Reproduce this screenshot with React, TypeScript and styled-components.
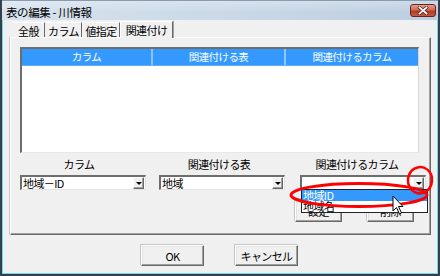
import React from "react";
import styled, { createGlobalStyle } from "styled-components";

const Global = createGlobalStyle`
  html, body { margin: 0; padding: 0; background: #fff; }
  body { width: 440px; height: 276px; overflow: hidden; }
  * { box-sizing: border-box; }
`;

const FONT = `"Noto Sans CJK JP", "Noto Sans", sans-serif`;

const Window = styled.div`
  position: relative;
  width: 440px;
  height: 276px;
  border: 2px solid #34404c;
  border-top: none;
  display: flex;
  flex-direction: column;
  font-family: ${FONT};
  font-size: 11px;
  color: #000;
  letter-spacing: -0.6px;
`;

const TitleBar = styled.div`
  height: 20px;
  flex: none;
  display: flex;
  align-items: flex-start;
  background: linear-gradient(to bottom, rgba(255,255,255,0.25), rgba(255,255,255,0) 60%),
    linear-gradient(to right, #d7e2ee 0%, #cbd9e8 50%, #bccee2 100%);
  border-top: 1px solid #8a9bb0;
`;

const TitleText = styled.span`
  font-size: 11.5px;
  line-height: 12px;
  margin: 5px 0 0 4px;
  color: #000;
  letter-spacing: -0.4px;
`;

const CloseButton = styled.div`
  margin: 3px 2px 0 auto;
  width: 26px;
  height: 13px;
  border-radius: 3px;
  border: 1px solid #6b2417;
  background: linear-gradient(to bottom, #e4a192 0%, #cf6a55 45%, #b43a25 55%, #c45a44 100%);
  display: flex;
  align-items: center;
  justify-content: center;
`;

const Body = styled.div`
  flex: 1;
  background: #f0f0f0;
  border: 1px solid #6fd9ec;
  border-top: none;
  display: flex;
  flex-direction: column;
`;

const TabStrip = styled.div`
  display: flex;
  align-items: flex-end;
  height: 17px;
  margin: 0 0 0 9px;
  position: relative;
  z-index: 2;
`;

const Tab = styled.div<{ $w: number; $active?: boolean }>`
  width: ${(p) => p.$w}px;
  height: ${(p) => (p.$active ? 17 : 15)}px;
  display: flex;
  align-items: center;
  justify-content: center;
  background: #f0f0f0;
  border-top: 1px solid #fff;
  border-left: 1px solid ${(p) => (p.$active ? "#fff" : "transparent")};
  border-right: 1px solid #696969;
  box-shadow: ${(p) => (p.$active ? "1px 0 0 #a0a0a0" : "none")};
  margin-bottom: ${(p) => (p.$active ? -1 : 0)}px;
  padding-top: ${(p) => (p.$active ? 0 : 1)}px;
  font-size: 11px;
  line-height: 12px;
`;

const Panel = styled.div`
  margin: 0 6px 0 7px;
  height: 198px;
  border-top: 1px solid #fff;
  border-left: 1px solid #fff;
  border-right: 1px solid #696969;
  border-bottom: 1px solid #696969;
  box-shadow: inset -1px -1px 0 #a0a0a0, -1px 0 0 #c8c8c8;
  padding: 9px 0 0 9px;
  display: flex;
  flex-direction: column;
`;

const ListBox = styled.div`
  width: 399px;
  height: 106px;
  background: #fff;
  border-style: solid;
  border-width: 2px 1px 1px 2px;
  border-color: #6d6d6d #d8d8d8 #e8e8e8 #6d6d6d;
`;

const ListHeader = styled.div`
  display: grid;
  grid-template-columns: 131px 133px 1fr;
  height: 17px;
  background: #3399ff;
  border-bottom: 1px solid #60aefc;
`;

const HeaderCell = styled.div<{ $last?: boolean }>`
  color: #fff;
  font-size: 10.5px;
  line-height: 16px;
  text-align: center;
  border-right: ${(p) => (p.$last ? "none" : "2px solid #8ec5fb")};
`;

const Fields = styled.div`
  display: flex;
  margin-top: 4px;
`;

const Field = styled.div<{ $ml: number }>`
  width: 126px;
  margin-left: ${(p) => p.$ml}px;
  display: flex;
  flex-direction: column;
  position: relative;
`;

const Label = styled.div<{ $shift?: number }>`
  height: 14px;
  line-height: 14px;
  font-size: 11px;
  text-align: center;
  margin-bottom: 4px;
  transform: translateX(${(p) => p.$shift ?? 0}px);
`;

const Combo = styled.div`
  height: 15px;
  background: #fff;
  border-style: solid;
  border-width: 2px 1px 1px 2px;
  border-color: #6d6d6d #e3e3e3 #e3e3e3 #6d6d6d;
  display: flex;
  align-items: center;
  position: relative;
`;

const ComboText = styled.span`
  flex: 1;
  padding-left: 1px;
  font-size: 11px;
  line-height: 12px;
  white-space: nowrap;
`;

const ComboButton = styled.div`
  width: 11px;
  height: 12px;
  margin-right: 1px;
  background: #f0f0f0;
  border-style: solid;
  border-width: 1px;
  border-color: #fff #696969 #696969 #fff;
  box-shadow: inset -1px -1px 0 #a0a0a0;
  display: flex;
  align-items: center;
  justify-content: center;
`;

const Arrow = styled.div`
  width: 0;
  height: 0;
  border-left: 3px solid transparent;
  border-right: 3px solid transparent;
  border-top: 3px solid #000;
`;

const DropList = styled.div`
  position: absolute;
  top: 100%;
  left: -1px;
  width: 127px;
  background: #fff;
  border: 1px solid #222;
  z-index: 3;
`;

const DropItem = styled.div<{ $sel?: boolean }>`
  height: 11px;
  line-height: 11px;
  font-size: 11px;
  padding-left: 1px;
  background: ${(p) => (p.$sel ? "#3399ff" : "#fff")};
  color: ${(p) => (p.$sel ? "#fff" : "#000")};
`;

const SubButtons = styled.div`
  display: flex;
  gap: 25px;
  margin: 9px 0 0 -5px;
`;

const Btn = styled.div<{ $w: number; $h: number }>`
  width: ${(p) => p.$w}px;
  height: ${(p) => p.$h}px;
  background: #f0f0f0;
  border-style: solid;
  border-width: 1px;
  border-color: #fff #696969 #696969 #fff;
  box-shadow: inset -1px -1px 0 #a0a0a0, inset 1px 1px 0 #e3e3e3, -1px -1px 0 #c4c4c4;
  display: flex;
  align-items: center;
  justify-content: center;
  font-size: 11px;
  line-height: 12px;
`;

const ButtonRow = styled.div`
  display: flex;
  justify-content: center;
  gap: 31px;
  margin-top: 10px;
  padding-right: 1px;
`;

const Overlay = styled.svg`
  position: absolute;
  left: -2px;
  top: 0;
  width: 440px;
  height: 276px;
  pointer-events: none;
  z-index: 10;
`;

export default function App() {
  return (
    <>
      <Global />
      <Window>
        <TitleBar>
          <TitleText>表の編集 - 川情報</TitleText>
          <CloseButton>
            <svg width="12" height="9" viewBox="0 0 12 9">
              <path d="M2.5 1.5 L9.5 7.5 M9.5 1.5 L2.5 7.5" stroke="#5a1a10" strokeWidth="3.2" strokeLinecap="square" />
              <path d="M2.5 1.5 L9.5 7.5 M9.5 1.5 L2.5 7.5" stroke="#fff" strokeWidth="1.8" strokeLinecap="square" />
            </svg>
          </CloseButton>
        </TitleBar>
        <Body>
          <TabStrip>
            <Tab $w={33}>全般</Tab>
            <Tab $w={37}>カラム</Tab>
            <Tab $w={38}>値指定</Tab>
            <Tab $w={53} $active>関連付け</Tab>
          </TabStrip>
          <Panel>
            <ListBox>
              <ListHeader>
                <HeaderCell>カラム</HeaderCell>
                <HeaderCell>関連付ける表</HeaderCell>
                <HeaderCell $last>関連付けるカラム</HeaderCell>
              </ListHeader>
            </ListBox>
            <Fields>
              <Field $ml={0}>
                <Label $shift={-4}>カラム</Label>
                <Combo>
                  <ComboText>地域－ID</ComboText>
                  <ComboButton><Arrow /></ComboButton>
                </Combo>
              </Field>
              <Field $ml={13}>
                <Label $shift={-3}>関連付ける表</Label>
                <Combo>
                  <ComboText>地域</ComboText>
                  <ComboButton><Arrow /></ComboButton>
                </Combo>
              </Field>
              <Field $ml={15}>
                <Label $shift={-6}>関連付けるカラム</Label>
                <Combo>
                  <ComboText></ComboText>
                  <ComboButton><Arrow /></ComboButton>
                  <DropList>
                    <DropItem $sel>地域ID</DropItem>
                    <DropItem>地域名</DropItem>
                  </DropList>
                </Combo>
                <SubButtons>
                  <Btn $w={47} $h={23}>設定</Btn>
                  <Btn $w={47} $h={23}>削除</Btn>
                </SubButtons>
              </Field>
            </Fields>
          </Panel>
          <ButtonRow>
            <Btn $w={63} $h={21}>OK</Btn>
            <Btn $w={63} $h={21}>キャンセル</Btn>
          </ButtonRow>
        </Body>
        <Overlay viewBox="0 0 440 276">
          <ellipse cx="359" cy="195" rx="68" ry="11.5" fill="none" stroke="#ff0000" strokeWidth="3" />
          <path d="M414 169 C 424 163, 433 172, 432 181 C 431 190, 424 195, 417 193 C 410 191, 406 183, 409 175 C 410 172, 412 170, 415 168" fill="none" stroke="#ff0000" strokeWidth="2.5" />
          <path d="M393 196 L393 211 L396.5 207.5 L399.5 214 L401.5 213 L398.5 206.5 L403 206.5 Z" fill="#fff" stroke="#000" strokeWidth="1" strokeLinejoin="miter" />
        </Overlay>
      </Window>
    </>
  );
}
